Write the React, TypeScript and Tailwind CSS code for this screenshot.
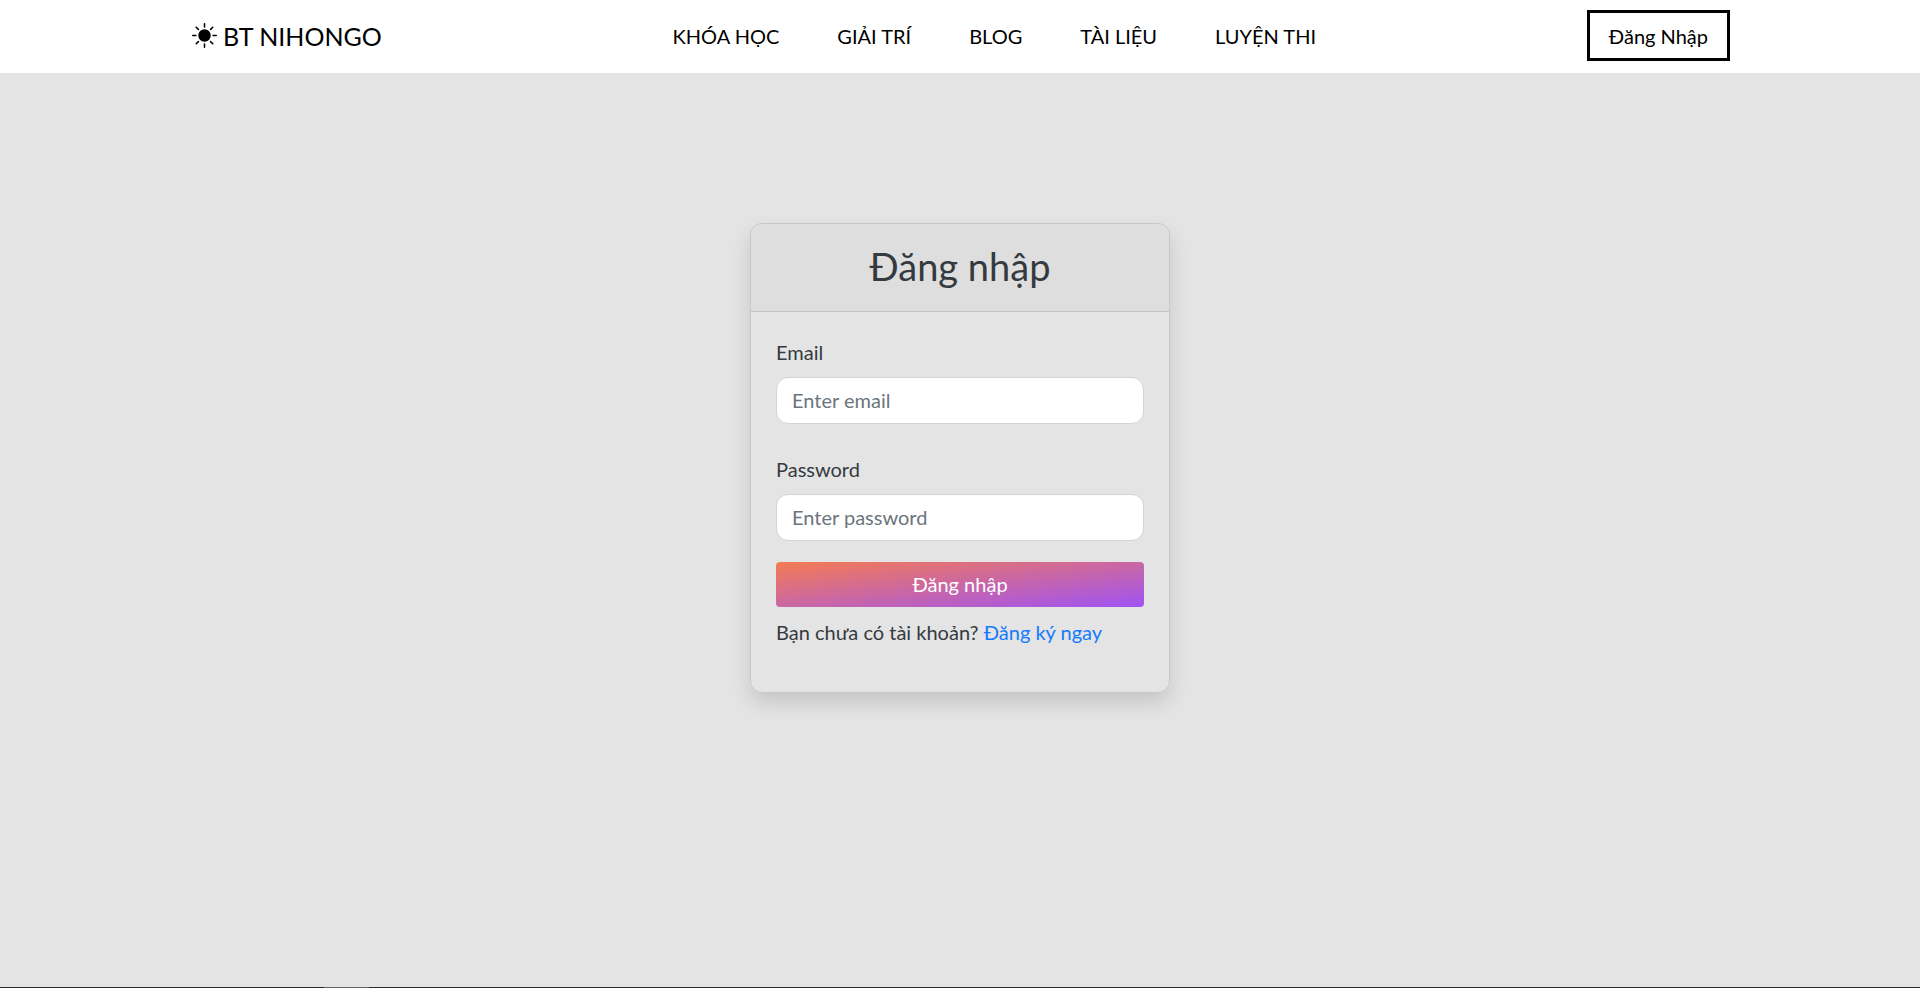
import type { ReactNode } from "react";
import { BsSunFill } from "react-icons/bs";

const links = ["KHÓA HỌC", "GIẢI TRÍ", "BLOG", "TÀI LIỆU", "LUYỆN THI"];

function Header() {
  return (
    <header className="bg-white text-black">
      <div className="mx-auto flex h-[73px] w-[calc(80%+4px)] items-center justify-between pb-0.5 pl-0.5">
        <a href="#" className="flex items-center gap-1.5 text-[25px] leading-9">
          <BsSunFill aria-hidden="true" />
          BT NIHONGO
        </a>
        <nav className="flex gap-[58px] pl-5">
          {links.map((link) => (
            <a key={link} href="#">
              {link}
            </a>
          ))}
        </nav>
        <button
          type="button"
          className="h-[51px] border-3 border-black px-[19px]"
        >
          Đăng Nhập
        </button>
      </div>
    </header>
  );
}

function Field({ id, label, type }: { id: string; label: ReactNode; type: string }) {
  return (
    <div>
      <label htmlFor={id} className="mb-2.5 block">
        {label}
      </label>
      <input
        id={id}
        type={type}
        placeholder={`Enter ${id}`}
        className="block h-[47px] w-full rounded-xl border border-[#ced4da] bg-white px-[15px] pb-0.5 placeholder:text-[#6c757d]"
      />
    </div>
  );
}

export default function App() {
  return (
    <div className="flex min-h-screen flex-col bg-[#e4e4e4] font-['Lato',sans-serif] text-xl leading-[30px] text-[#343a40]">
      <Header />
      <main className="grow pt-[150px]">
        <section className="mx-auto w-full max-w-[420px] rounded-xl border border-[#c8c8c8] shadow-[0_10px_20px_rgba(0,0,0,0.13)]">
          <h1 className="rounded-t-xl border-b border-[#c4c4c4] bg-[#dedede] pt-[19px] pb-[21px] text-center text-[38px] leading-[47px]">
            Đăng nhập
          </h1>
          <form className="px-[25px] pt-[25px] pb-[45px]">
            <div className="flex flex-col gap-[30px]">
              <Field id="email" label="Email" type="email" />
              <Field id="password" label="Password" type="password" />
            </div>
            <button
              type="button"
              className="mt-[21px] mb-2.5 block h-[45px] w-full rounded bg-linear-to-br/srgb from-[#f47b53] to-[#a053f4] pb-0.5 text-white"
            >
              Đăng nhập
            </button>
            <p>
              Bạn chưa có tài khoản?{" "}
              <a href="#" className="text-[#147aff]">
                Đăng ký ngay
              </a>
            </p>
          </form>
        </section>
      </main>
      <footer className="flex h-px bg-[#2b272b] pl-[324px]">
        <div className="w-[45px] bg-[#666366]" />
      </footer>
    </div>
  );
}
